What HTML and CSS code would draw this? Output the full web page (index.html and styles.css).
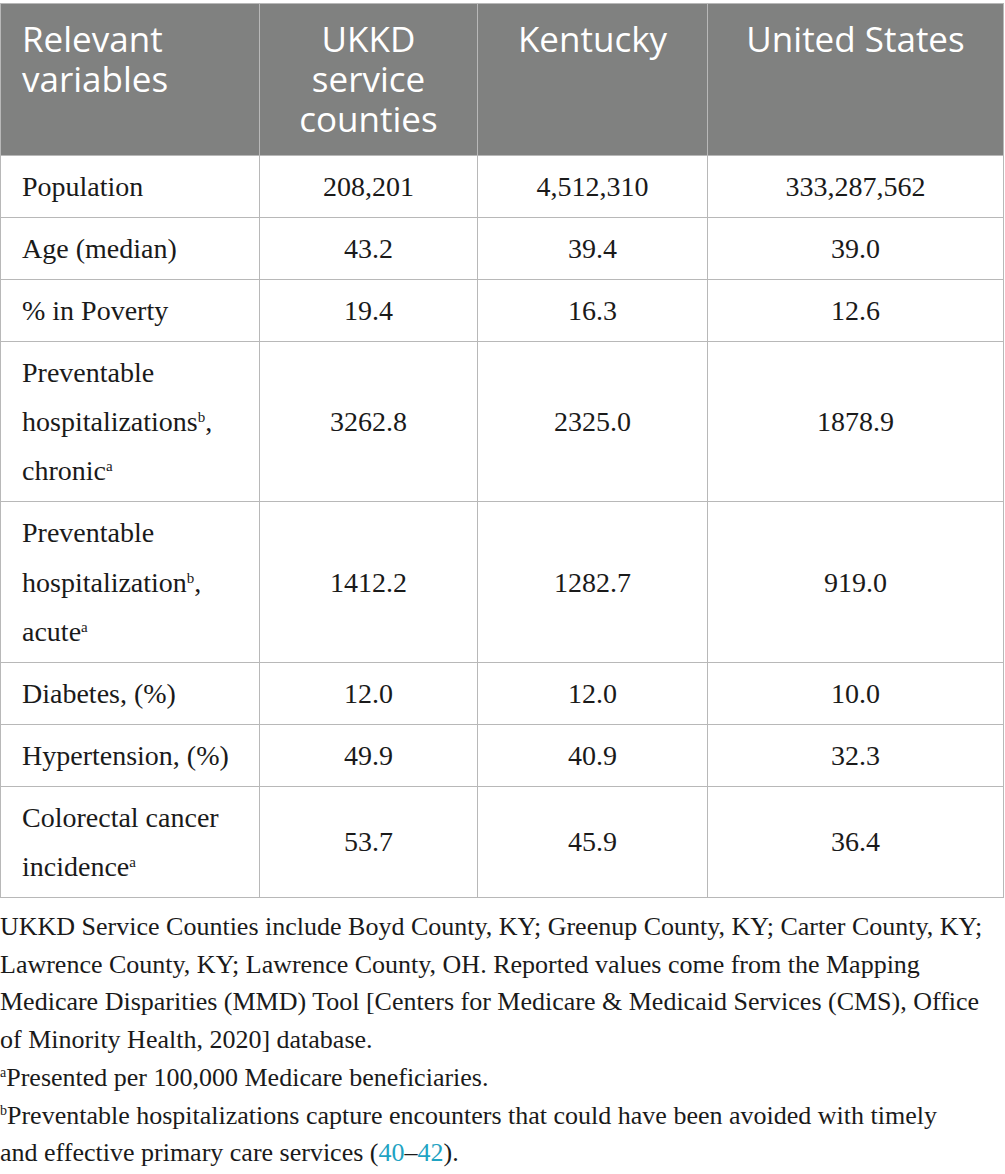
FILE: index.html
```html
<!DOCTYPE html>
<html lang="en">
<head>
<meta charset="utf-8">
<title>Table</title>
<link rel="stylesheet" href="styles.css">
</head>
<body>
<table class="data">
  <colgroup>
    <col class="c1"><col class="c2"><col class="c3"><col class="c4">
  </colgroup>
  <thead>
    <tr>
      <th class="left">Relevant variables</th>
      <th>UKKD service counties</th>
      <th>Kentucky</th>
      <th>United States</th>
    </tr>
  </thead>
  <tbody>
    <tr><td class="left">Population</td><td>208,201</td><td>4,512,310</td><td>333,287,562</td></tr>
    <tr><td class="left">Age (median)</td><td>43.2</td><td>39.4</td><td>39.0</td></tr>
    <tr><td class="left">% in Poverty</td><td>19.4</td><td>16.3</td><td>12.6</td></tr>
    <tr><td class="left">Preventable hospitalizations<sup>b</sup>, chronic<sup>a</sup></td><td>3262.8</td><td>2325.0</td><td>1878.9</td></tr>
    <tr><td class="left">Preventable hospitalization<sup>b</sup>, acute<sup>a</sup></td><td>1412.2</td><td>1282.7</td><td>919.0</td></tr>
    <tr><td class="left">Diabetes, (%)</td><td>12.0</td><td>12.0</td><td>10.0</td></tr>
    <tr><td class="left">Hypertension, (%)</td><td>49.9</td><td>40.9</td><td>32.3</td></tr>
    <tr><td class="left">Colorectal cancer incidence<sup>a</sup></td><td>53.7</td><td>45.9</td><td>36.4</td></tr>
  </tbody>
</table>
<div class="notes">
  <p>UKKD Service Counties include Boyd County, KY; Greenup County, KY; Carter County, KY; Lawrence County, KY; Lawrence County, OH. Reported values come from the Mapping Medicare Disparities (MMD) Tool [Centers for Medicare &amp; Medicaid Services (CMS), Office of Minority Health, 2020] database.</p>
  <p><sup>a</sup>Presented per 100,000 Medicare beneficiaries.</p>
  <p><sup>b</sup>Preventable hospitalizations capture encounters that could have been avoided with timely<br>and effective primary care services (<a href="#">40</a>–<a href="#">42</a>).</p>
</div>
</body>
</html>
```

FILE: styles.css
```css
html, body {
  margin: 0;
  padding: 0;
  background: #ffffff;
}

body {
  width: 1005px;
  font-family: "Liberation Serif", "Times New Roman", serif;
  color: #1a1a1a;
}

.data {
  margin-top: 3px;
  width: 1003px;
  border-collapse: collapse;
  table-layout: fixed;
}

.c1 { width: 259px; }
.c2 { width: 218px; }
.c3 { width: 230px; }
.c4 { width: 296px; }

.data th {
  background: #808180;
  color: #ffffff;
  font-family: "Open Sans", "DejaVu Sans", sans-serif;
  font-weight: 400;
  font-size: 35px;
  line-height: 40px;
  padding: 15px 12px 16px 12px;
  text-align: center;
  vertical-align: top;
  border: 1px solid #b8b8b8;
}

.data td {
  font-size: 28px;
  line-height: 49.2px;
  padding: 6px 12px 5.8px 12px;
  text-align: center;
  vertical-align: middle;
  border: 1px solid #b8b8b8;
}

.data .left {
  text-align: left;
  padding-left: 21px;
  padding-right: 8px;
}

.data sup {
  font-size: 15px;
  line-height: 0;
  vertical-align: 9px;
}

.notes {
  margin-top: 10px;
  font-size: 26px;
  line-height: 37.7px;
}

.notes p {
  margin: 0;
}

.notes sup {
  font-size: 14px;
  line-height: 0;
  vertical-align: 9px;
}

.notes a {
  color: #1fa3c3;
  text-decoration: none;
}
```
